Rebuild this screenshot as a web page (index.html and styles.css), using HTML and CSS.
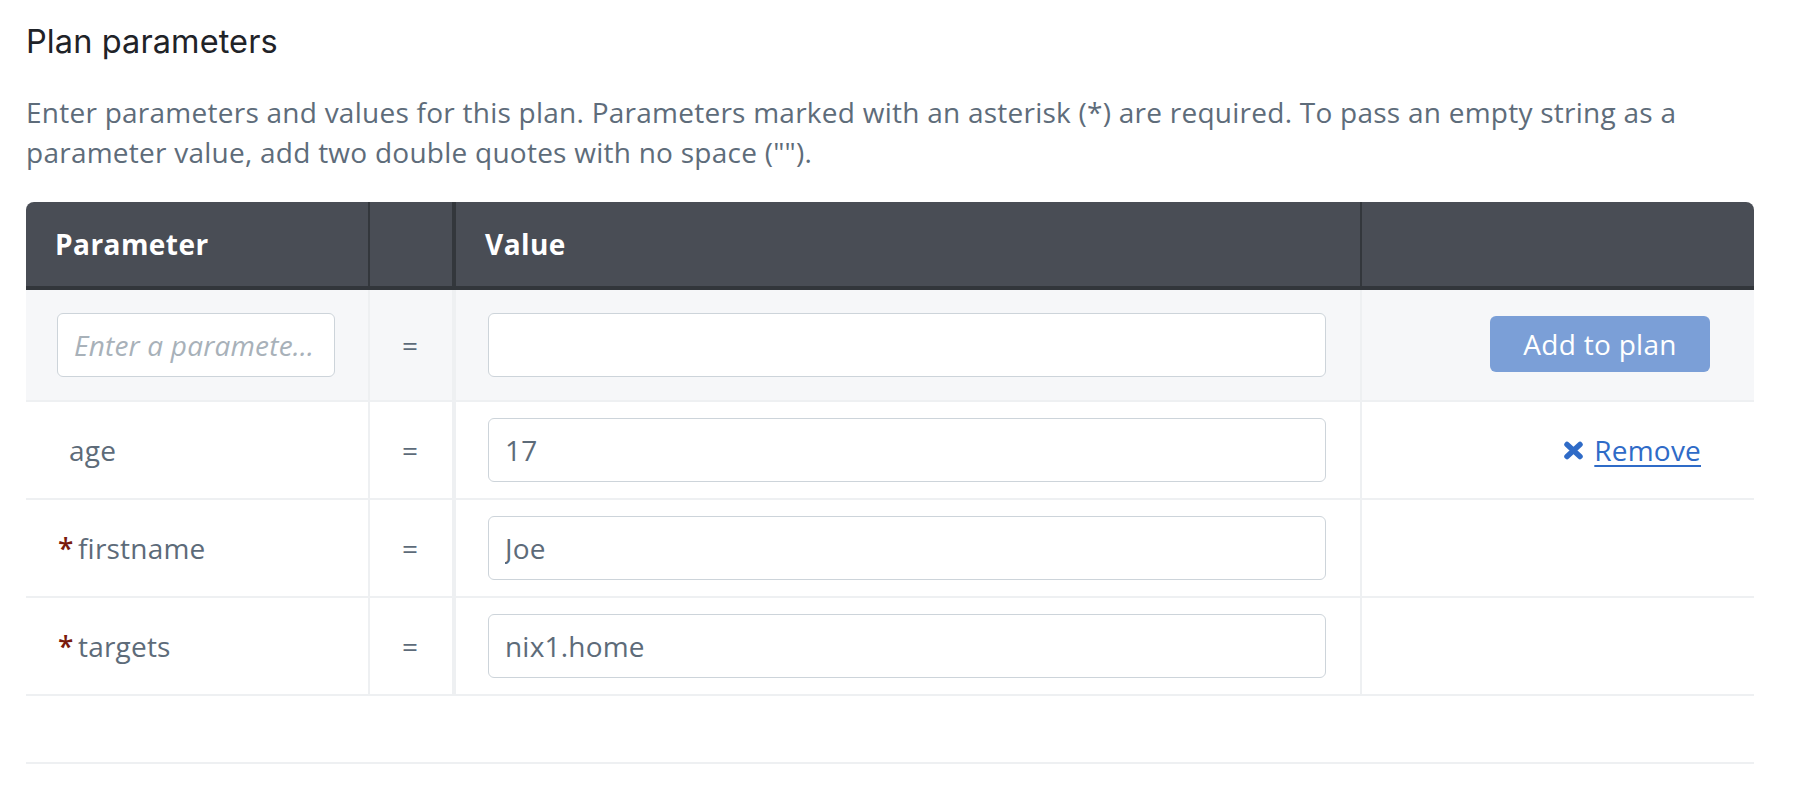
FILE: index.html
```html
<!DOCTYPE html>
<html lang="en">
<head>
<meta charset="utf-8">
<title>Plan parameters</title>
<link rel="stylesheet" href="styles.css">
</head>
<body>
<div class="page">
  <h2 class="title">Plan parameters</h2>
  <p class="desc">Enter parameters and values for this plan. Parameters marked with an asterisk (*) are required. To pass an empty string as a parameter value, add two double quotes with no space ("").</p>

  <div class="ptable">
    <div class="row head">
      <div class="cell c1">Parameter</div>
      <div class="cell c2"></div>
      <div class="cell c3">Value</div>
      <div class="cell c4"></div>
    </div>

    <div class="row new">
      <div class="cell c1"><input class="field" type="text" placeholder="Enter a parameter name"></div>
      <div class="cell c2">=</div>
      <div class="cell c3"><input class="field" type="text"></div>
      <div class="cell c4"><button class="add-btn" type="button">Add to plan</button></div>
    </div>

    <div class="row">
      <div class="cell c1"><span class="pname opt">age</span></div>
      <div class="cell c2">=</div>
      <div class="cell c3"><input class="field" type="text" value="17"></div>
      <div class="cell c4">
        <a class="remove" href="#">
          <svg class="x-icon" width="21" height="19" viewBox="0 0 21 19" aria-hidden="true"><path d="M4 3.5 L17 15.5 M17 3.5 L4 15.5" stroke="#2f6bc7" stroke-width="5.5" stroke-linecap="round" fill="none"/></svg>
          <span class="remove-text">Remove</span>
        </a>
      </div>
    </div>

    <div class="row">
      <div class="cell c1"><span class="req">*</span><span class="pname">firstname</span></div>
      <div class="cell c2">=</div>
      <div class="cell c3"><input class="field" type="text" value="Joe"></div>
      <div class="cell c4"></div>
    </div>

    <div class="row">
      <div class="cell c1"><span class="req">*</span><span class="pname">targets</span></div>
      <div class="cell c2">=</div>
      <div class="cell c3"><input class="field" type="text" value="nix1.home"></div>
      <div class="cell c4"></div>
    </div>

    <div class="spacer"></div>
  </div>
</div>
</body>
</html>
```

FILE: styles.css
```css
* { box-sizing: border-box; }

html, body {
  margin: 0;
  padding: 0;
  background: #ffffff;
}

body {
  font-family: "Open Sans", "Liberation Sans", sans-serif;
  color: #5d6b79;
  letter-spacing: 0.2px;
}

.page {
  padding-left: 26px;
  width: 1754px;
}

.title {
  margin: 0;
  padding-top: 22px;
  font-family: Inter, "Liberation Sans", sans-serif;
  font-weight: 400;
  font-size: 32.5px;
  line-height: 40px;
  letter-spacing: 0.1px;
  color: #1f2328;
}

.desc {
  margin: 30px 0 0 0;
  font-size: 28px;
  line-height: 40px;
  letter-spacing: 0.25px;
  color: #5e6c7a;
  width: 1710px;
}

.ptable {
  margin-top: 30px;
  width: 1728px;
}

.row {
  display: grid;
  grid-template-columns: 344px 86px 906px 392px;
  height: 98px;
  border-bottom: 2px solid #eef0f2;
}

.cell {
  display: flex;
  align-items: center;
  font-size: 28px;
  color: #5d6b79;
}

.c1 { padding: 0 33px 0 31px; border-right: 2px solid #eef0f2; }
.c2 { justify-content: center; border-right: 4px solid #eef0f2; padding-right: 2px; }
.c3 { padding: 0 34px 0 32px; border-right: 2px solid #eef0f2; }
.c4 { justify-content: flex-end; padding-right: 44px; }

.row.head {
  height: 88px;
  background: #494d55;
  border-bottom: 4px solid #32363b;
  border-radius: 8px 8px 0 0;
}

.row.head .cell {
  color: #ffffff;
  font-weight: 700;
  font-size: 28px;
  letter-spacing: 0.45px;
  border-right-color: #33373c;
}

.row.head .c1 { padding-left: 29px; }
.row.head .c3 { padding-left: 29px; }

.row.new {
  height: 112px;
  background: #f6f7f9;
}

.field {
  width: 100%;
  height: 64px;
  border: 1px solid #cdd4da;
  border-radius: 6px;
  background: #ffffff;
  padding: 0 16px;
  font-family: "Open Sans", "Liberation Sans", sans-serif;
  font-size: 28px;
  letter-spacing: 0.2px;
  color: #5d6b79;
  text-overflow: ellipsis;
  outline: none;
}

.field::placeholder {
  color: #a8b1b9;
  font-style: italic;
}

.add-btn {
  width: 220px;
  height: 56px;
  border: none;
  border-radius: 6px;
  background: #7b9fd7;
  color: #ffffff;
  font-family: "Open Sans", "Liberation Sans", sans-serif;
  font-size: 28px;
  letter-spacing: 0.3px;
  padding: 0;
  margin-top: -2px;
}

.remove {
  display: flex;
  align-items: center;
  gap: 10px;
  margin-right: 9px;
  color: #2f6bc7;
  text-decoration: none;
}

.remove-text {
  text-decoration: underline;
  text-decoration-thickness: 2px;
  text-underline-offset: 4px;
}

.x-icon { display: block; }

.pname.opt { margin-left: 12px; }

.req {
  display: inline-block;
  width: 20px;
  color: #7a1b0d;
  font-weight: 600;
  margin-left: 1px;
}

.spacer {
  height: 68px;
  border-bottom: 2px solid #eef0f2;
}
```
